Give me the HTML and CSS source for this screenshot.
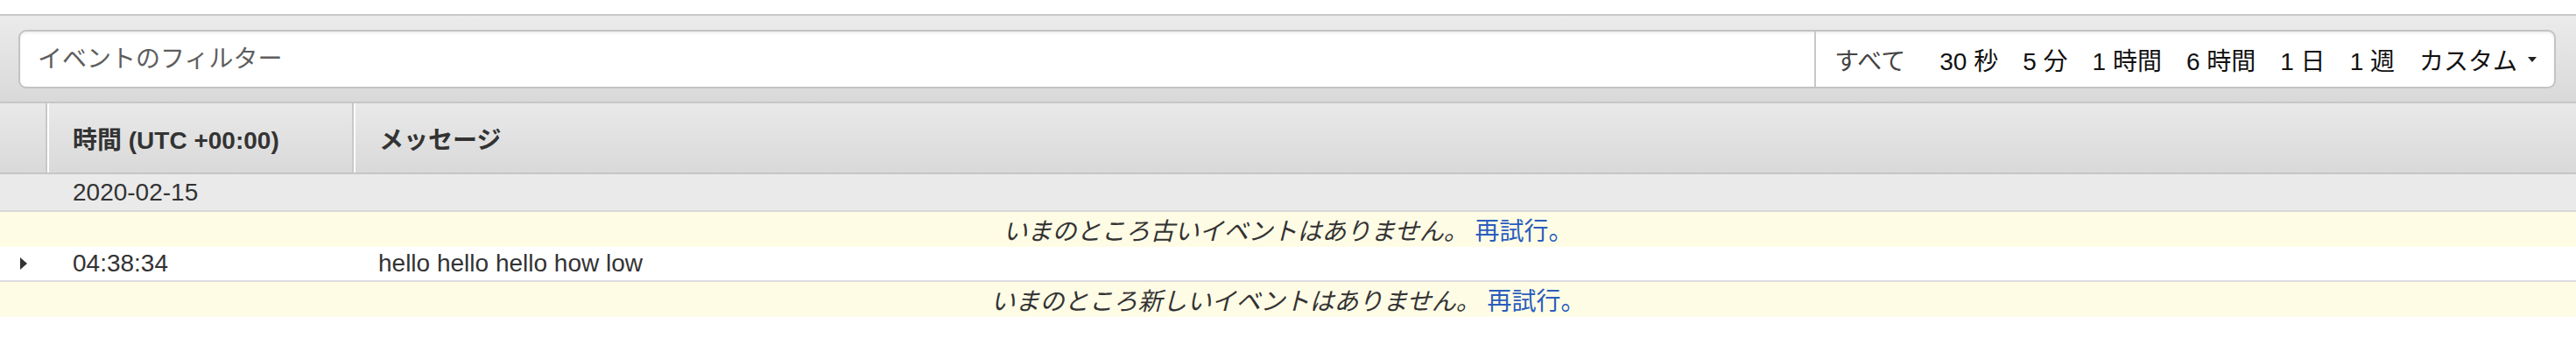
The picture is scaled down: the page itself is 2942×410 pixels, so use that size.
FILE: index.html
```html
<!DOCTYPE html>
<html lang="ja">
<head>
<meta charset="utf-8">
<title>ログイベント</title>
<link rel="stylesheet" href="styles.css">
</head>
<body>
<div class="top-space"></div>
<div class="toolbar">
  <div class="filter">
    <input class="filter-input" type="text" placeholder="イベントのフィルター">
    <div class="range">
      <span class="range-item range-all">すべて</span>
      <span class="range-item">30 秒</span>
      <span class="range-item">5 分</span>
      <span class="range-item">1 時間</span>
      <span class="range-item">6 時間</span>
      <span class="range-item">1 日</span>
      <span class="range-item">1 週</span>
      <span class="range-item range-custom">カスタム<span class="caret"></span></span>
    </div>
  </div>
</div>
<div class="table">
  <div class="thead">
    <div class="th th-toggle"></div>
    <div class="th">時間 (UTC +00:00)</div>
    <div class="th">メッセージ</div>
  </div>
  <div class="row row-date">
    <div class="cell"></div>
    <div class="cell cell-time">2020-02-15</div>
    <div class="cell"></div>
  </div>
  <div class="notice">いまのところ古いイベントはありません。 <a class="retry" href="#">再試行。</a></div>
  <div class="row row-event">
    <div class="cell cell-toggle"><span class="arrow"></span></div>
    <div class="cell cell-time">04:38:34</div>
    <div class="cell cell-msg">hello hello hello how low</div>
  </div>
  <div class="notice">いまのところ新しいイベントはありません。 <a class="retry" href="#">再試行。</a></div>
</div>
</body>
</html>
```
FILE: styles.css
```css
html, body {
  margin: 0;
  padding: 0;
  background: #fff;
}
body {
  font-family: "Liberation Sans", "Noto Sans CJK JP", sans-serif;
  font-size: 28px;
  color: #333;
}
.top-space {
  height: 16px;
}
.toolbar {
  border-top: 2px solid #c8c8c8;
  border-bottom: 2px solid #c6c6c6;
  background: linear-gradient(#ebebeb, #d9d9d9);
  padding: 16px 23px 15px 21px;
}
.filter {
  display: flex;
  height: 67px;
  box-sizing: border-box;
  border: 2px solid #c3c3c3;
  border-radius: 9px;
  background: #fff;
  box-shadow: inset 0 2px 3px rgba(0, 0, 0, 0.07);
  overflow: hidden;
}
.filter-input {
  flex: 1;
  min-width: 0;
  border: none;
  outline: none;
  background: transparent;
  padding: 0 0 0 20px;
  font-family: "Liberation Sans", "Noto Sans CJK JP", sans-serif;
  font-size: 28px;
  color: #333;
}
.filter-input::placeholder {
  color: #5e5e5e;
  opacity: 1;
}
.range {
  display: flex;
  align-items: center;
  gap: 28px;
  border-left: 2px solid #c8c8c8;
  padding: 0 20px 0 21px;
}
.range-item {
  color: #111;
  white-space: nowrap;
}
.range-all {
  color: #444;
  margin-right: 11px;
}
.range-custom {
  display: flex;
  align-items: center;
}
.caret {
  display: inline-block;
  margin-left: 12px;
  width: 0;
  height: 0;
  border-left: 5px solid transparent;
  border-right: 5px solid transparent;
  border-top: 6px solid #222;
}
.thead,
.row {
  display: grid;
  grid-template-columns: 54px 350px 1fr;
}
.thead {
  height: 79px;
  border-bottom: 2px solid #c6c6c6;
  background: linear-gradient(#e9e9e9, #d9d9d9);
}
.th {
  display: flex;
  align-items: center;
  padding-left: 27px;
  font-weight: bold;
  color: #333;
  white-space: nowrap;
}
.th + .th {
  border-left: 2px solid #fff;
}
.th:not(:last-child) {
  border-right: 2px solid #c8c8c8;
}
.th-toggle {
  padding-left: 0;
}
.row-date {
  height: 41px;
  background: #eaeaea;
  border-bottom: 2px solid #d8d7dc;
}
.row-event {
  height: 38px;
  background: #fff;
  border-bottom: 2px solid #dcdbe0;
}
.cell {
  display: flex;
  align-items: center;
  white-space: nowrap;
  color: #333;
}
.cell-time {
  padding-left: 29px;
}
.cell-msg {
  padding-left: 28px;
}
.cell-toggle {
  justify-content: center;
}
.arrow {
  display: inline-block;
  width: 0;
  height: 0;
  border-top: 7px solid transparent;
  border-bottom: 7px solid transparent;
  border-left: 8px solid #333;
}
.notice {
  height: 40px;
  display: flex;
  align-items: center;
  justify-content: center;
  background: #fffce6;
  font-style: italic;
  color: #333;
  white-space: pre;
}
.retry {
  font-style: normal;
  color: #2a5dbd;
  text-decoration: none;
}
```
